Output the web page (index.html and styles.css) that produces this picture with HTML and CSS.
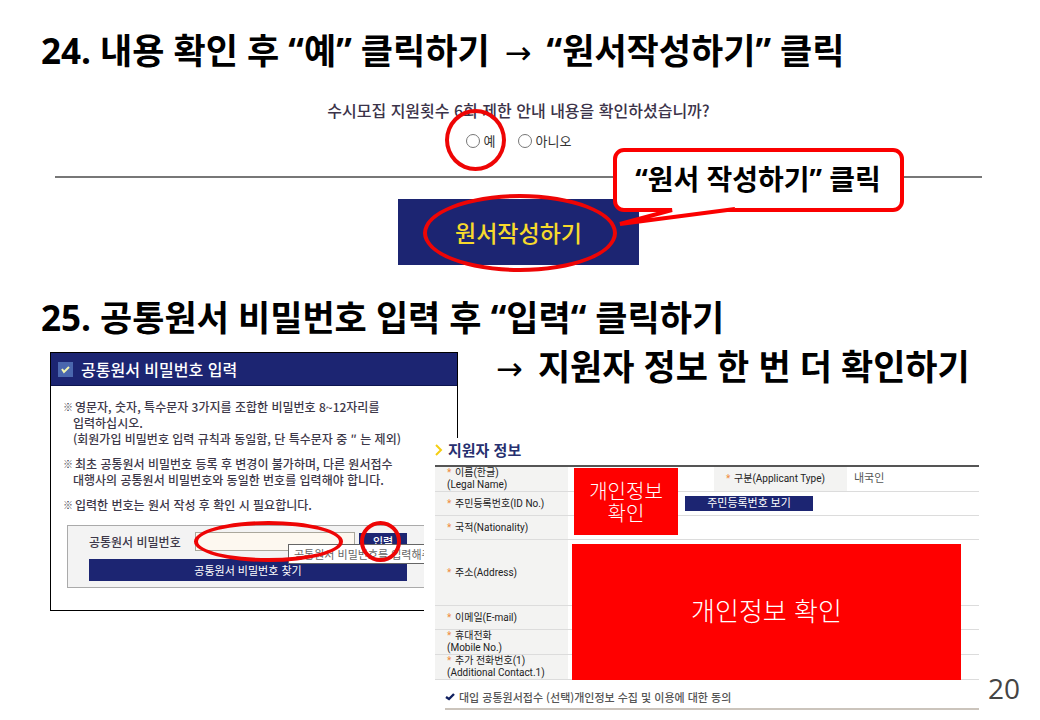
FILE: index.html
```html
<!DOCTYPE html>
<html lang="ko">
<head>
<meta charset="utf-8">
<meta name="viewport" content="width=device-width, initial-scale=1">
<title>원서작성 안내</title>
<link rel="stylesheet" href="styles.css">
</head>
<body>
<main class="slide">
  <section class="step">
    <h1 class="step-title">24. 내용 확인 후 “예” 클릭하기 <span class="arrow">→</span> “원서작성하기” 클릭</h1>
    <fieldset class="question">
      <legend class="question-text">수시모집 지원횟수 6회 제한 안내 내용을 확인하셨습니까?</legend>
      <div class="choices">
        <label class="choice"><input type="radio" name="agree">예<span class="ring ring-yes"></span></label>
        <label class="choice"><input type="radio" name="agree">아니오</label>
      </div>
    </fieldset>
    <div class="action">
      <button class="write-button" type="button">원서작성하기<span class="ring ring-write"></span></button>
      <div class="callout">“원서 작성하기” 클릭
        <svg class="callout-tail" width="130" height="26" viewBox="0 0 130 26" aria-hidden="true">
          <path d="M62 0 L62 5 L10 19 L125 5 L125 0 Z" fill="#fff"/>
          <path d="M42 5 H62 L10 19 L125 4" fill="none" stroke="#fb0000" stroke-width="4"/>
        </svg>
      </div>
    </div>
  </section>

  <section class="step">
    <h2 class="step-title">25. 공통원서 비밀번호 입력 후 “입력“ 클릭하기</h2>
    <div class="board">
      <form class="dialog">
        <h3 class="dialog-title">
          <svg width="15" height="15" viewBox="0 0 15 15" aria-hidden="true"><rect width="15" height="15" fill="#4a67ae"/><path d="M4 7l2 3 5-5" fill="none" stroke="#f4f7b0" stroke-width="2"/></svg>
          공통원서 비밀번호 입력
        </h3>
        <ul class="notes">
          <li>영문자, 숫자, 특수문자 3가지를 조합한 비밀번호 8~12자리를<br>입력하십시오.<br>(회원가입 비밀번호 입력 규칙과 동일함, 단 특수문자 중 ″ 는 제외)</li>
          <li>최초 공통원서 비밀번호 등록 후 변경이 불가하며, 다른 원서접수<br>대행사의 공통원서 비밀번호와 동일한 번호를 입력해야 합니다.</li>
          <li>입력한 번호는 원서 작성 후 확인 시 필요합니다.</li>
        </ul>
        <div class="password-box">
          <div class="password-row">
            <label for="pw">공통원서 비밀번호</label>
            <input class="password-input" id="pw" type="password">
            <button class="enter-button" type="button">입력</button>
            <span class="tooltip">공통원서 비밀번호를 입력해주세요</span>
            <span class="ring ring-input"></span>
            <span class="ring ring-enter"></span>
          </div>
          <button class="find-button" type="button">공통원서 비밀번호 찾기</button>
        </div>
      </form>

      <h2 class="step-title step-next"><span class="arrow">→</span> 지원자 정보 한 번 더 확인하기</h2>

      <div class="applicant">
        <h3 class="applicant-title">
          <svg width="8" height="12" viewBox="0 0 8 12" aria-hidden="true"><path d="M1 1l5 5-5 5" fill="none" stroke="#f5ce12" stroke-width="2"/></svg>
          지원자 정보
        </h3>
        <div class="record">
          <table class="info">
            <colgroup><col class="col-label"><col class="col-value"><col class="col-label"><col></colgroup>
            <tr><th scope="row"><i>*</i>이름(한글)<br>(Legal Name)</th><td></td><th scope="row"><i>*</i>구분(Applicant Type)</th><td class="type-value">내국인</td></tr>
            <tr><th scope="row"><i>*</i>주민등록번호(ID No.)</th><td colspan="3" class="id-cell"><button class="id-button" type="button">주민등록번호 보기</button></td></tr>
            <tr><th scope="row"><i>*</i>국적(Nationality)</th><td colspan="3"></td></tr>
            <tr class="address"><th scope="row"><i>*</i>주소(Address)</th><td colspan="3"></td></tr>
            <tr><th scope="row"><i>*</i>이메일(E-mail)</th><td colspan="3"></td></tr>
            <tr><th scope="row"><i>*</i>휴대전화<br>(Mobile No.)</th><td colspan="3"></td></tr>
            <tr><th scope="row"><i>*</i>추가 전화번호(1)<br>(Additional Contact.1)</th><td colspan="3"></td></tr>
          </table>
          <div class="mask mask-name">개인정보<br>확인</div>
          <div class="mask mask-contact">개인정보 확인</div>
        </div>
        <p class="consent">
          <svg width="10" height="8" viewBox="0 0 10 8" aria-hidden="true"><path d="M1 4l3 2 5-5" fill="none" stroke="#10205f" stroke-width="2.4"/></svg>
          대입 공통원서접수 (선택)개인정보 수집 및 이용에 대한 동의
        </p>
      </div>
      <span class="page-number">20</span>
    </div>
  </section>
</main>
</body>
</html>
```

FILE: styles.css
```css
:root {
  --navy: #1c2572;
  --red: #fb0000;
  --line: #dcdcdc;
}

* { box-sizing: border-box; }

body {
  margin: 0;
  background: #fff;
  color: #333;
  font-family: "Noto Sans CJK KR", sans-serif;
  font-size: 11px;
}

button { border: 0; padding: 0; font: inherit; }

.slide { padding-top: 27px; }

.step-title {
  margin: 0;
  padding-left: 41px;
  color: #000;
  font-family: "Open Sans", "Noto Sans CJK KR", sans-serif;
  font-size: 35px;
  font-weight: 700;
  line-height: 48px;
  white-space: nowrap;
}

.arrow {
  margin: 0 6px;
  font-family: "DejaVu Sans", sans-serif;
  font-size: 32px;
  font-weight: 400;
  line-height: 24px;
}

.ring {
  position: absolute;
  border: 4px solid #ee0505;
  border-radius: 50%;
  pointer-events: none;
}

/* Step 24 */
.question {
  margin: 0 58px 0 55px;
  padding: 0 0 25px;
  border: 0;
  border-bottom: 2px solid #777;
  text-align: center;
}

.question-text {
  width: 100%;
  padding: 24px 0 0;
  color: #3b3349;
  font-size: 16px;
  font-weight: 500;
  line-height: 22px;
}

.choices {
  display: flex;
  justify-content: center;
  gap: 22px;
  padding-top: 10px;
}

.choice {
  position: relative;
  display: flex;
  align-items: center;
  gap: 4px;
  font-size: 13px;
  line-height: 20px;
}

.choice input {
  width: 14px;
  height: 14px;
  margin: 0;
  appearance: none;
  border: 1px solid #777;
  border-radius: 50%;
}

.ring-yes { left: -21px; top: -22px; width: 61px; height: 62px; }

.action {
  position: relative;
  display: flex;
  justify-content: center;
  padding: 21px 0 29px;
  margin-left: -3px;
}

.write-button {
  position: relative;
  width: 241px;
  height: 66px;
  background: var(--navy);
  color: #f6d92c;
  font-size: 23px;
  font-weight: 500;
}

.ring-write { left: 25px; top: -5px; width: 194px; height: 78px; }

.callout {
  position: absolute;
  left: calc(50% + 94px);
  top: -30px;
  width: 291px;
  height: 64px;
  border: 4px solid var(--red);
  border-radius: 11px;
  background: #fff;
  color: #000;
  font-family: "Open Sans", "Noto Sans CJK KR", sans-serif;
  font-size: 28px;
  font-weight: 700;
  line-height: 54px;
  text-align: center;
  white-space: nowrap;
}

.callout-tail { position: absolute; left: -7px; top: 53px; }

/* Step 25 */
.board {
  display: grid;
  grid-template-columns: 374fr 34fr 521fr 61px;
  grid-template-rows: 86px auto;
  padding: 10px 0 0 50px;
}

.dialog {
  grid-area: 1 / 1 / 3 / 3;
  align-self: start;
  padding-bottom: 22px;
  border: 1px solid #000;
}

.dialog-title {
  display: flex;
  align-items: center;
  gap: 8px;
  margin: 0;
  padding: 0 7px;
  border-bottom: 1px solid #0d1550;
  background: var(--navy);
  color: #fff;
  font-size: 16px;
  font-weight: 500;
  line-height: 32px;
}

.notes {
  margin: 0;
  padding: 13px 0 3px 22px;
  color: #3d3849;
  font-size: 12px;
  font-weight: 500;
  line-height: 16px;
  list-style: none;
  white-space: nowrap;
}

.notes li { margin-bottom: 9px; }
.notes li::before { content: "※"; float: left; margin-left: -10px; padding-right: 2px; font-size: 10px; }

.password-box {
  margin: 0 0 0 16px;
  padding: 6px 50px 6px 21px;
  border: 1px solid #aaa;
  border-right: 0;
  background: #f3f3f3;
}

.password-row {
  position: relative;
  display: flex;
  align-items: center;
  gap: 4px;
  padding-bottom: 8px;
  color: #3d3849;
  font-weight: 500;
}

.password-row label { flex: 1; font-size: 12px; line-height: 19px; white-space: nowrap; }

.password-input {
  width: 160px;
  height: 19px;
  border: 1px solid #aaa79c;
  background: #fdf8f0;
}

.enter-button {
  width: 48px;
  height: 17px;
  background: var(--navy);
  color: #fff;
  line-height: 17px;
}

.tooltip {
  position: absolute;
  right: -50px;
  top: 12px;
  width: 169px;
  height: 20px;
  padding-left: 5px;
  overflow: hidden;
  border: 1px solid #666;
  background: #fff;
  color: #666;
  font-weight: 400;
  line-height: 18px;
  white-space: nowrap;
}

.ring-input { right: 64px; top: -11px; width: 149px; height: 41px; }
.ring-enter { right: 6px; top: -11px; width: 41px; height: 41px; }

.find-button {
  display: block;
  width: 100%;
  height: 22px;
  background: var(--navy);
  color: #fff;
}

.step-next { grid-area: 1 / 3 / 2 / 5; padding: 3px 0 0 32px; line-height: 24px; }

.applicant {
  grid-area: 2 / 2 / 3 / 4;
  z-index: 1;
  padding-left: 11px;
  background: #fff;
}

.applicant-title {
  display: flex;
  align-items: center;
  gap: 5px;
  margin: 0;
  padding-bottom: 3px;
  color: #27306f;
  font-size: 15px;
  font-weight: 700;
  line-height: 24px;
}

.record { position: relative; }

.info {
  width: 100%;
  border-collapse: collapse;
  border-top: 2px solid #555;
  table-layout: fixed;
  font-family: Roboto, "Noto Sans CJK KR", sans-serif;
  font-size: 10px;
  line-height: 12px;
}

.col-label { width: 133px; }
.col-value { width: 146px; }

.info tr { height: 24px; }
.info .address { height: 66px; }
.info th, .info td { padding: 0; border-bottom: 1px solid var(--line); }

.info th {
  padding-left: 12px;
  background: #f3f3f2;
  color: #222;
  font-weight: 400;
  text-align: left;
  white-space: nowrap;
}

.info i { display: inline-block; width: 8px; color: #f08b3c; font-style: normal; }
.info .type-value { padding-left: 7px; color: #555; font-size: 11px; }
.info .id-cell { padding-left: 117px; }

.id-button {
  display: block;
  width: 128px;
  height: 15px;
  background: var(--navy);
  color: #fff;
  font-size: 11px;
  line-height: 15px;
}

.mask {
  position: absolute;
  display: grid;
  place-content: center;
  background: #f00;
  color: #fff;
  font-weight: 300;
  text-align: center;
}

.mask-name { left: 139px; top: 3px; width: 104px; height: 67px; font-size: 20px; line-height: 22px; }
.mask-contact { left: 137px; right: 18px; top: 79px; bottom: 0; padding-bottom: 6px; font-size: 26px; }

.consent {
  display: flex;
  align-items: center;
  gap: 4px;
  margin: 6px 0 0 10px;
  border-bottom: 2px solid #cbc4bc;
  color: #555;
  font-size: 11px;
  font-weight: 500;
  line-height: 22px;
}

.page-number {
  grid-area: 2 / 4 / 3 / 5;
  align-self: end;
  padding: 0 0 4px 9px;
  color: #444;
  font-family: "Open Sans", sans-serif;
  font-size: 28px;
  line-height: 36px;
}
```
